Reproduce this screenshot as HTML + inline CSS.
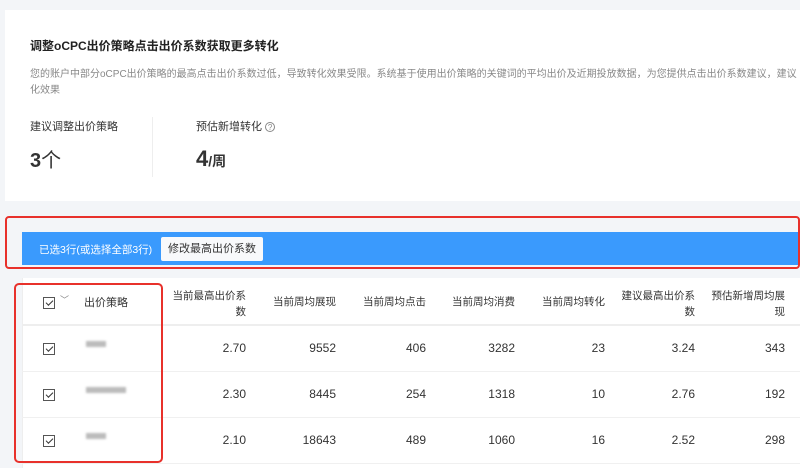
<!DOCTYPE html>
<html><head><meta charset="utf-8"><style>
*{margin:0;padding:0;box-sizing:border-box}
body{width:800px;height:468px;overflow:hidden;background:#f3f5f8;font-family:"Liberation Sans","Noto Sans CJK SC",sans-serif;color:#333;position:relative}
.a{position:absolute;white-space:nowrap}
.card{position:absolute;left:5px;top:10px;width:795px;height:191px;background:#fff}
.cb{position:absolute;width:12px;height:12px;border:1px solid #555;background:#fff}
.cb:after{content:"";position:absolute;left:2px;top:2px;width:6px;height:3px;border-left:1px solid #333;border-bottom:1px solid #333;transform:rotate(-45deg)}
.h{position:absolute;font-size:10.5px;color:#333;text-align:right;line-height:16px}
.c{position:absolute;font-size:12px;color:#333;text-align:right}
.blur{position:absolute;height:6px;background:#bbb;filter:blur(1px)}
</style></head><body>
<div class="card"></div>
<div class="a" style="left:30px;top:37px;font-size:12px;font-weight:bold;color:#222">调整oCPC出价策略点击出价系数获取更多转化</div>
<div class="a" style="left:30px;top:67px;font-size:10px;color:#888;line-height:16px">您的账户中部分oCPC出价策略的最高点击出价系数过低，导致转化效果受限。系统基于使用出价策略的关键词的平均出价及近期投放数据，为您提供点击出价系数建议，建议<br>化效果</div>
<div class="a" style="left:30px;top:118px;font-size:11px;color:#333">建议调整出价策略</div>
<div class="a" style="left:30px;top:144px;font-size:20px;font-weight:bold;color:#333">3<span style="font-weight:normal">个</span></div>
<div class="a" style="left:152px;top:117px;width:1px;height:60px;background:#eee"></div>
<div class="a" style="left:196px;top:118px;font-size:11px;color:#333">预估新增转化 <span style="display:inline-block;width:10px;height:10px;border:1px solid #888;border-radius:50%;font-size:8px;line-height:9px;text-align:center;color:#888">?</span></div>
<div class="a" style="left:196px;top:146px;font-size:22px;font-weight:bold;color:#333">4<span style="font-size:14px">/周</span></div>
<div class="a" style="left:22px;top:232px;width:778px;height:33px;background:#3a9afd"></div>
<div class="a" style="left:39px;top:242px;font-size:10.5px;color:#fff">已选3行(或选择全部3行)</div>
<div class="a" style="left:161px;top:237px;width:102px;height:24px;background:#f8f9fb;border-radius:2px;font-size:11px;color:#333;text-align:center;line-height:24px">修改最高出价系数</div>
<div class="a" style="left:5px;top:216px;width:795px;height:53px;border:2px solid #e8312b;border-radius:4px"></div>
<div class="a" style="left:22px;top:278px;width:778px;height:190px;background:#fff;border-left:1px solid #eee"></div>
<div class="a" style="left:22px;top:324px;width:778px;height:2px;background:#eee"></div>
<div class="a" style="left:22px;top:371px;width:778px;height:1px;background:#f0f0f0"></div>
<div class="a" style="left:22px;top:417px;width:778px;height:1px;background:#f0f0f0"></div>
<div class="a" style="left:22px;top:463px;width:778px;height:1px;background:#f0f0f0"></div>
<div class="cb" style="left:43px;top:297px"></div>
<div class="a" style="left:60px;top:293px;font-size:9px;color:#888">﹀</div>
<div class="a" style="left:84px;top:294px;font-size:11px">出价策略</div>
<div class="h" style="right:554px;top:288px">当前最高出价系<br>数</div>
<div class="h" style="right:464px;top:294px">当前周均展现</div>
<div class="h" style="right:374px;top:294px">当前周均点击</div>
<div class="h" style="right:285px;top:294px">当前周均消费</div>
<div class="h" style="right:195px;top:294px">当前周均转化</div>
<div class="h" style="right:105px;top:288px">建议最高出价系<br>数</div>
<div class="h" style="right:15px;top:288px">预估新增周均展<br>现</div>
<div class="cb" style="left:43px;top:343px"></div>
<div class="cb" style="left:43px;top:389px"></div>
<div class="cb" style="left:43px;top:435px"></div>
<div class="blur" style="left:86px;top:341px;width:20px"></div>
<div class="blur" style="left:86px;top:387px;width:40px"></div>
<div class="blur" style="left:86px;top:433px;width:20px"></div>
<div class="c" style="right:554px;top:341px">2.70</div><div class="c" style="right:464px;top:341px">9552</div><div class="c" style="right:374px;top:341px">406</div><div class="c" style="right:285px;top:341px">3282</div><div class="c" style="right:195px;top:341px">23</div><div class="c" style="right:105px;top:341px">3.24</div><div class="c" style="right:15px;top:341px">343</div>
<div class="c" style="right:554px;top:387px">2.30</div><div class="c" style="right:464px;top:387px">8445</div><div class="c" style="right:374px;top:387px">254</div><div class="c" style="right:285px;top:387px">1318</div><div class="c" style="right:195px;top:387px">10</div><div class="c" style="right:105px;top:387px">2.76</div><div class="c" style="right:15px;top:387px">192</div>
<div class="c" style="right:554px;top:433px">2.10</div><div class="c" style="right:464px;top:433px">18643</div><div class="c" style="right:374px;top:433px">489</div><div class="c" style="right:285px;top:433px">1060</div><div class="c" style="right:195px;top:433px">16</div><div class="c" style="right:105px;top:433px">2.52</div><div class="c" style="right:15px;top:433px">298</div>
<div class="a" style="left:14px;top:283px;width:149px;height:180px;border:2px solid #e8312b;border-radius:5px"></div>
</body></html>
